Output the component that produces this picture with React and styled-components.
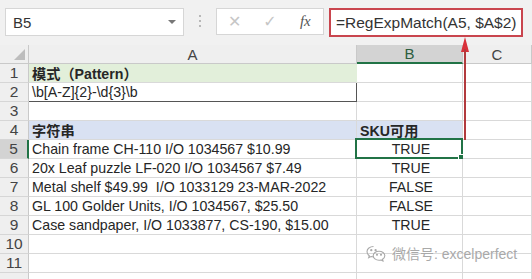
import React from "react";
import styled, { createGlobalStyle } from "styled-components";

const GlobalStyle = createGlobalStyle`
  html, body {
    margin: 0;
    padding: 0;
    background: #ffffff;
  }
  body {
    font-family: "Liberation Sans", "Noto Sans CJK SC", sans-serif;
    color: #222;
  }
`;

const COLS = ["A", "B", "C"];

const rows = [
  { a: "模式（Pattern）", bold: true, fillA: "#e2efda" },
  { a: "\\b[A-Z]{2}-\\d{3}\\b", boxed: true },
  { a: "" },
  { a: "字符串", b: "SKU可用", bold: true, fillA: "#d9e1f2", fillB: "#d9e1f2", leftB: true },
  { a: "Chain frame CH-110 I/O 1034567 $10.99", b: "TRUE", selected: true },
  { a: "20x Leaf puzzle LF-020 I/O 1034567 $7.49", b: "TRUE" },
  { a: "Metal shelf $49.99  I/O 1033129 23-MAR-2022", b: "FALSE" },
  { a: "GL 100 Golder Units, I/O 1034567, $25.50", b: "FALSE" },
  { a: "Case sandpaper, I/O 1033877, CS-190, $15.00", b: "TRUE" },
  { a: "" },
  { a: "" },
  { a: "", noLabel: true },
];

const Page = styled.div`
  position: relative;
  width: 532px;
  height: 279px;
  overflow: hidden;
  background: #ffffff;
`;

const FormulaBar = styled.div`
  display: flex;
  align-items: flex-start;
  height: 45px;
  padding: 8px 0 0 5px;
  box-sizing: border-box;
  background: #f1f1f1;
`;

const NameBox = styled.div`
  display: flex;
  align-items: center;
  justify-content: space-between;
  width: 179px;
  height: 28px;
  box-sizing: border-box;
  padding: 0 7px 0 7px;
  background: #ffffff;
  border: 1px solid #d6d6d6;
  font-size: 15px;
  color: #333;
`;

const Caret = styled.span`
  width: 0;
  height: 0;
  border-left: 4px solid transparent;
  border-right: 4px solid transparent;
  border-top: 4px solid #777;
`;

const Grip = styled.div`
  display: flex;
  flex-direction: column;
  gap: 3px;
  width: 32px;
  align-items: center;
  padding-top: 7px;
  span {
    width: 2px;
    height: 2px;
    background: #b8b8b8;
  }
`;

const ButtonBox = styled.div`
  display: flex;
  align-items: center;
  width: 108px;
  height: 27px;
  box-sizing: border-box;
  background: #ffffff;
  border: 1px solid #d6d6d6;
  margin-right: 5px;
`;

const BarIcon = styled.span`
  width: 36px;
  text-align: center;
  font-size: ${(p) => p.$size || 16}px;
  color: ${(p) => p.$color || "#c6c6c6"};
  font-family: ${(p) => (p.$serif ? '"Liberation Serif", serif' : '"DejaVu Sans", sans-serif')};
  font-style: ${(p) => (p.$serif ? "italic" : "normal")};
`;

const FormulaInput = styled.div`
  display: flex;
  align-items: center;
  width: 194px;
  height: 29px;
  box-sizing: border-box;
  padding-left: 5px;
  background: #ffffff;
  border: 2px solid #c9454e;
  font-size: 15.5px;
  color: #333;
  white-space: nowrap;
`;

const Sheet = styled.div`
  display: grid;
  grid-template-columns: 29px 328px 106px 1fr;
  grid-auto-rows: 19px;
`;

const Corner = styled.div`
  position: relative;
  background: #efefef;
  border-right: 1px solid #c9c9c9;
  border-bottom: 1px solid #c9c9c9;
  &::after {
    content: "";
    position: absolute;
    right: 3px;
    bottom: 3px;
    width: 0;
    height: 0;
    border-left: 11px solid transparent;
    border-bottom: 11px solid #bdbdbd;
  }
`;

const ColHead = styled.div`
  display: flex;
  align-items: center;
  justify-content: center;
  box-sizing: border-box;
  font-size: 15px;
  color: ${(p) => (p.$active ? "#2c5e3f" : "#444")};
  background: ${(p) => (p.$active ? "#d3d3d3" : "#efefef")};
  border-right: 1px solid #c9c9c9;
  border-bottom: ${(p) => (p.$active ? "2px solid #217346" : "1px solid #c9c9c9")};
`;

const RowHead = styled.div`
  display: flex;
  align-items: center;
  justify-content: center;
  box-sizing: border-box;
  font-size: 15.5px;
  color: #444;
  background: ${(p) => (p.$active ? "#d3d3d3" : "#efefef")};
  border-bottom: 1px solid #d6d6d6;
  border-right: ${(p) => (p.$active ? "2px solid #217346" : "1px solid #c9c9c9")};
`;

const Cell = styled.div`
  position: relative;
  display: flex;
  align-items: center;
  justify-content: ${(p) => (p.$center ? "center" : "flex-start")};
  box-sizing: border-box;
  padding-left: 3px;
  font-size: 14.2px;
  font-weight: ${(p) => (p.$bold ? 700 : 400)};
  white-space: pre;
  overflow: visible;
  background: ${(p) => p.$fill || "#ffffff"};
  border-right: 1px solid ${(p) => (p.$boxed ? "#555" : p.$spill ? "transparent" : "#d9d9d9")};
  border-bottom: 1px solid ${(p) => (p.$boxed ? "#555" : "#d9d9d9")};
  color: #262626;
`;

const Selection = styled.div`
  position: absolute;
  inset: -2px -1px -1px -2px;
  border: 2px solid #217346;
  pointer-events: none;
  &::after {
    content: "";
    position: absolute;
    right: -4px;
    bottom: -4px;
    width: 5px;
    height: 5px;
    background: #217346;
    border: 1px solid #fff;
  }
`;

const Callout = styled.div`
  position: absolute;
  left: 461px;
  top: 37px;
  width: 8px;
  height: 103px;
  &::before {
    content: "";
    position: absolute;
    left: 0;
    top: 0;
    width: 0;
    height: 0;
    border-left: 4px solid transparent;
    border-right: 4px solid transparent;
    border-bottom: 15px solid #d8303a;
  }
  &::after {
    content: "";
    position: absolute;
    left: 3px;
    top: 12px;
    bottom: 0;
    width: 2px;
    background: #b23a3d;
  }
`;

const Watermark = styled.div`
  position: absolute;
  left: 366px;
  top: 243px;
  display: flex;
  align-items: center;
  gap: 6px;
  font-size: 14px;
  color: #a9a9a9;
  white-space: nowrap;
  text-shadow: 0 0 2px #fff;
`;

function WeChatIcon() {
  return (
    <svg width="20" height="17" viewBox="0 0 20 17" fill="none" stroke="#a9a9a9" strokeWidth="1.1">
      <path d="M7.5 1.5c-3.6 0-6.5 2.3-6.5 5.2 0 1.6.9 3 2.3 4l-.6 2 2.3-1.2c.8.2 1.6.4 2.5.4" />
      <path d="M13 6.2c-3.2 0-5.8 2-5.8 4.5s2.6 4.5 5.8 4.5c.7 0 1.4-.1 2-.3l2 1-.5-1.7c1.4-.8 2.3-2.1 2.3-3.5 0-2.5-2.6-4.5-5.8-4.5z" />
      <circle cx="5.3" cy="5.2" r=".6" fill="#a9a9a9" />
      <circle cx="9.6" cy="5.2" r=".6" fill="#a9a9a9" />
      <circle cx="11" cy="9.8" r=".5" fill="#a9a9a9" />
      <circle cx="15" cy="9.8" r=".5" fill="#a9a9a9" />
    </svg>
  );
}

export default function App() {
  return (
    <Page>
      <GlobalStyle />
      <FormulaBar>
        <NameBox>
          <span>B5</span>
          <Caret />
        </NameBox>
        <Grip>
          <span />
          <span />
          <span />
        </Grip>
        <ButtonBox>
          <BarIcon $size={16}>✕</BarIcon>
          <BarIcon $size={16}>✓</BarIcon>
          <BarIcon $serif $size={15} $color="#555">fx</BarIcon>
        </ButtonBox>
        <FormulaInput>=RegExpMatch(A5, $A$2)</FormulaInput>
      </FormulaBar>

      <Sheet>
        <Corner />
        {COLS.map((c) => (
          <ColHead key={c} $active={c === "B"}>
            {c}
          </ColHead>
        ))}
        {rows.map((r, i) => (
          <React.Fragment key={i}>
            <RowHead $active={r.selected}>{r.noLabel ? "" : i + 1}</RowHead>
            <Cell
              $bold={r.bold}
              $fill={r.fillA}
              $boxed={r.boxed}
              $spill={i === 0}
            >
              {r.a}
            </Cell>
            <Cell $bold={r.bold} $fill={r.fillB} $center={!r.leftB && !!r.b}>
              {r.b}
              {r.selected && <Selection />}
            </Cell>
            <Cell />
          </React.Fragment>
        ))}
      </Sheet>

      <Callout />
      <Watermark>
        <WeChatIcon />
        <span>微信号: excelperfect</span>
      </Watermark>
    </Page>
  );
}
